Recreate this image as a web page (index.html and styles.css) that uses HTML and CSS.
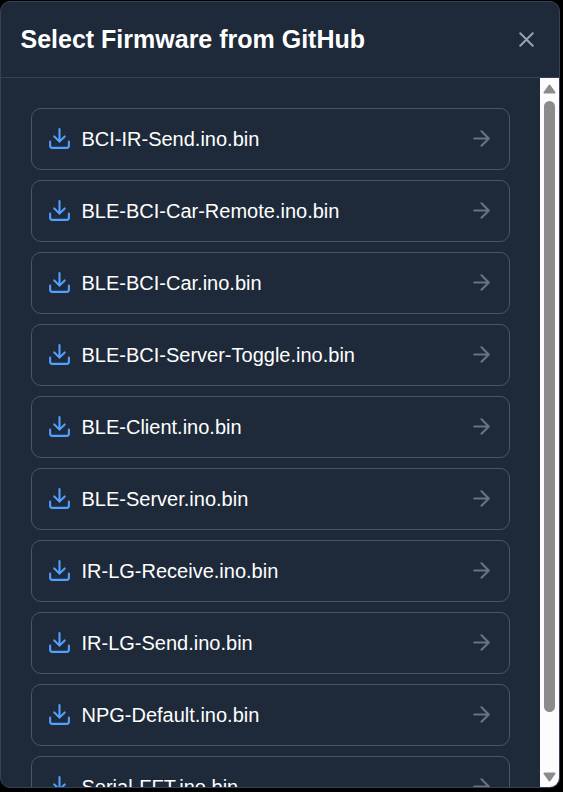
FILE: index.html
```
<!DOCTYPE html>
<html lang="en">
<head>
<meta charset="utf-8">
<title>Select Firmware from GitHub</title>
<link rel="stylesheet" href="styles.css">
</head>
<body>
<svg class="defs" aria-hidden="true">
  <symbol id="download" viewBox="0 0 24 24"><path d="M12 15V3M7 10l5 5 5-5M21 15v4a2 2 0 0 1-2 2H5a2 2 0 0 1-2-2v-4"/></symbol>
  <symbol id="arrow" viewBox="0 0 24 24"><path d="M5 12h14M12 5l7 7-7 7"/></symbol>
</svg>
<div class="modal" role="dialog">
  <header class="header">
    <h2 class="title">Select Firmware from GitHub</h2>
    <button class="close" aria-label="Close"><svg class="icon" viewBox="0 0 24 24"><path d="M18 6 6 18M6 6l12 12"/></svg></button>
  </header>
  <div class="body">
    <div class="list">
      <button class="item"><svg class="icon download"><use href="#download"/></svg><span class="name">BCI-IR-Send.ino.bin</span><svg class="icon arrow"><use href="#arrow"/></svg></button>
      <button class="item"><svg class="icon download"><use href="#download"/></svg><span class="name">BLE-BCI-Car-Remote.ino.bin</span><svg class="icon arrow"><use href="#arrow"/></svg></button>
      <button class="item"><svg class="icon download"><use href="#download"/></svg><span class="name">BLE-BCI-Car.ino.bin</span><svg class="icon arrow"><use href="#arrow"/></svg></button>
      <button class="item"><svg class="icon download"><use href="#download"/></svg><span class="name">BLE-BCI-Server-Toggle.ino.bin</span><svg class="icon arrow"><use href="#arrow"/></svg></button>
      <button class="item"><svg class="icon download"><use href="#download"/></svg><span class="name">BLE-Client.ino.bin</span><svg class="icon arrow"><use href="#arrow"/></svg></button>
      <button class="item"><svg class="icon download"><use href="#download"/></svg><span class="name">BLE-Server.ino.bin</span><svg class="icon arrow"><use href="#arrow"/></svg></button>
      <button class="item"><svg class="icon download"><use href="#download"/></svg><span class="name">IR-LG-Receive.ino.bin</span><svg class="icon arrow"><use href="#arrow"/></svg></button>
      <button class="item"><svg class="icon download"><use href="#download"/></svg><span class="name">IR-LG-Send.ino.bin</span><svg class="icon arrow"><use href="#arrow"/></svg></button>
      <button class="item"><svg class="icon download"><use href="#download"/></svg><span class="name">NPG-Default.ino.bin</span><svg class="icon arrow"><use href="#arrow"/></svg></button>
      <button class="item"><svg class="icon download"><use href="#download"/></svg><span class="name">Serial-FFT.ino.bin</span><svg class="icon arrow"><use href="#arrow"/></svg></button>
    </div>
    <div class="scrollbar">
      <svg class="cap" viewBox="0 0 13 10"><path d="M6.5 1.5 11.5 8.5H1.5Z"/></svg>
      <div class="thumb"></div>
      <svg class="cap" viewBox="0 0 13 10"><path d="M6.5 8.5 11.5 1.5H1.5Z"/></svg>
    </div>
  </div>
</div>
</body>
</html>
```

FILE: styles.css
```
* { box-sizing: border-box; }

body {
  margin: 0;
  padding-top: 1px;
  height: 792px;
  overflow: hidden;
  background: #000;
  font-family: "Liberation Sans", Arial, sans-serif;
  color: #fff;
}

.defs { display: none; }

.modal {
  display: flex;
  flex-direction: column;
  width: 560px;
  height: 787px;
  overflow: hidden;
  background: #1e2939;
  border: 1px solid #364153;
  border-radius: 10px;
}

.header {
  display: flex;
  flex: none;
  align-items: center;
  justify-content: space-between;
  height: 76px;
  padding: 0 20px;
  border-bottom: 1px solid #364153;
}

.title {
  margin: 0 0 0 -0.5px;
  font-size: 25px;
  line-height: 35px;
  font-weight: 700;
}

.close {
  display: flex;
  padding: 0;
  border: 0;
  background: none;
  color: #99a1af;
}

.icon {
  flex: none;
  width: 25px;
  height: 25px;
  fill: none;
  stroke: currentColor;
  stroke-width: 2;
  stroke-linecap: round;
  stroke-linejoin: round;
}

.body {
  display: flex;
  flex: 1;
  min-height: 0;
}

.list {
  display: flex;
  flex: 1;
  flex-direction: column;
  gap: 10px;
  padding: 30px 30px 0;
  overflow: hidden;
}

.item {
  display: flex;
  flex: none;
  align-items: center;
  gap: 9.5px;
  height: 62px;
  padding: 0 15px 2px;
  border: 1px solid #4a5565;
  border-radius: 10px;
  background: none;
  color: #fff;
  font: 20px/30px "Liberation Sans", Arial, sans-serif;
  text-align: left;
}

.name {
  flex: 1;
  padding-top: 1px;
}
.download { color: #51a2ff; }
.arrow { color: #6a7282; }

.scrollbar {
  display: flex;
  flex-direction: column;
  align-items: center;
  justify-content: space-between;
  width: 19px;
  padding: 6px 0 5px;
  background: #fcfcfc;
}

.cap {
  flex: none;
  width: 13px;
  height: 10px;
  fill: #8b8b8b;
  stroke: #8b8b8b;
  stroke-width: 2;
  stroke-linejoin: round;
}

.thumb {
  width: 11px;
  height: 611px;
  margin: 7px 0 auto;
  border-radius: 6px;
  background: #8b8b8b;
}
```
